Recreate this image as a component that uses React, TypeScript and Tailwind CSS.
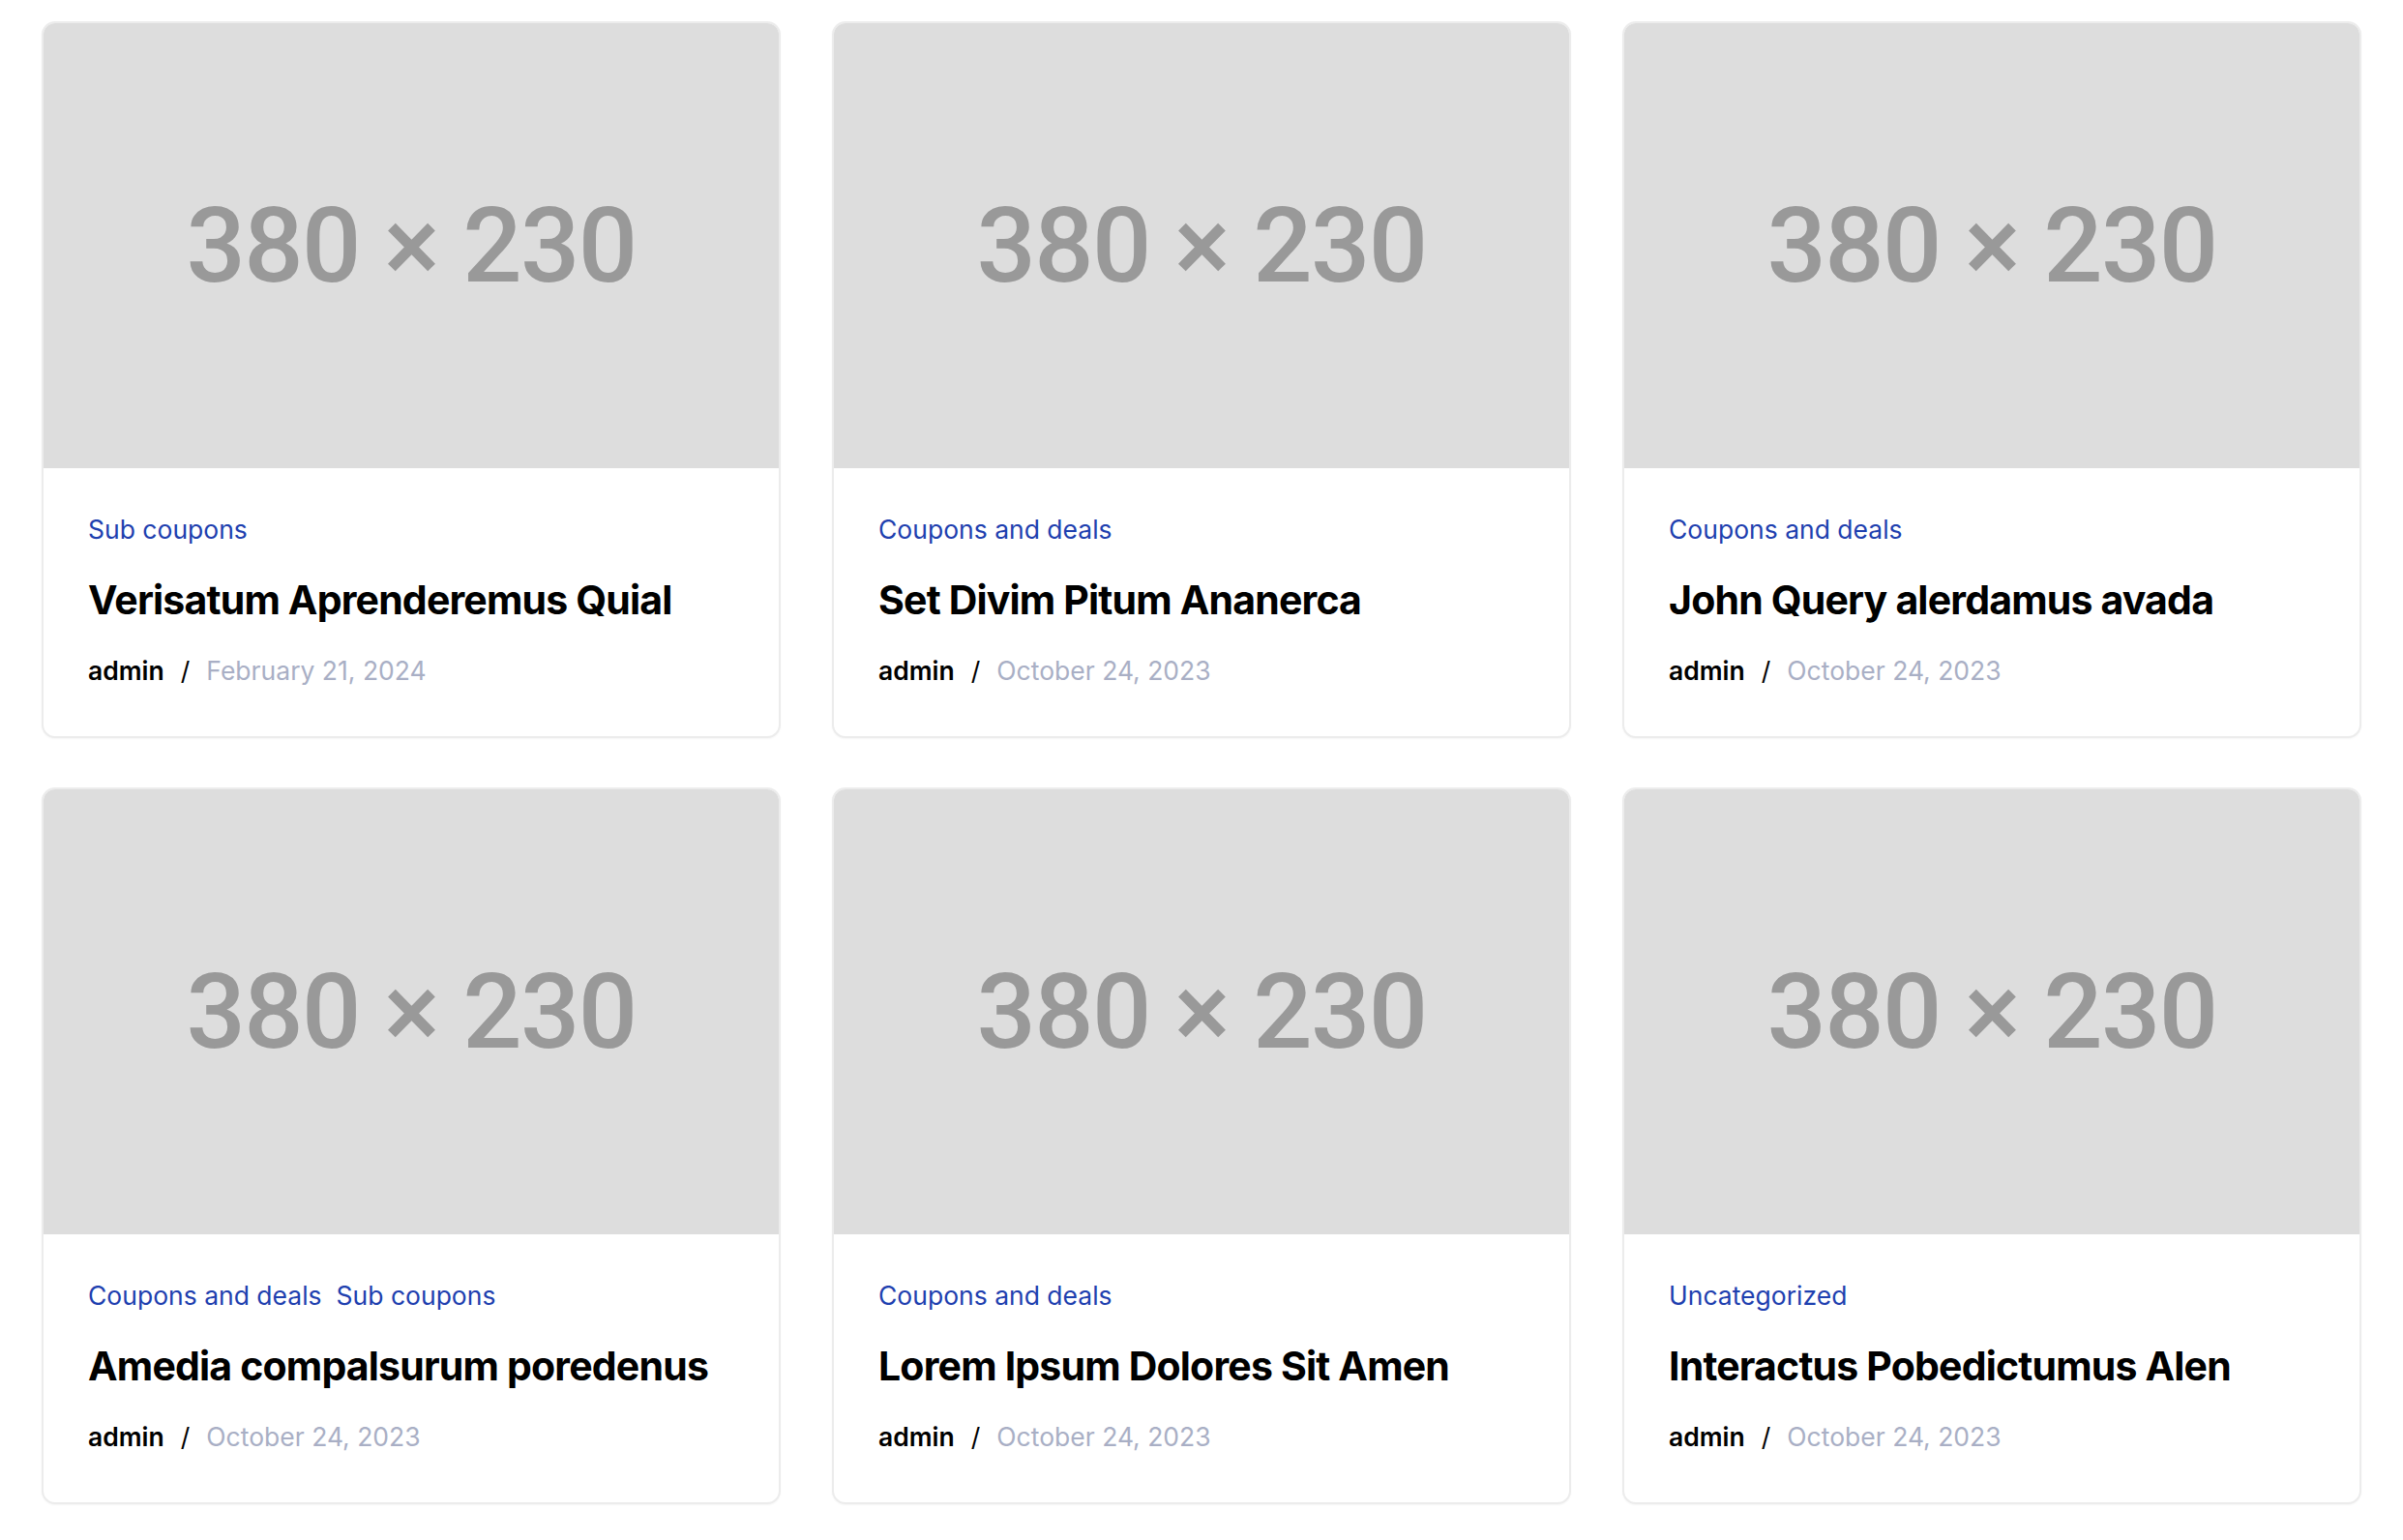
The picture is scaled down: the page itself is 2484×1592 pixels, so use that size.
import React from "react";

type Post = { cats: string[]; title: string; date: string };

const posts: Post[] = [
  { cats: ["Sub coupons"], title: "Verisatum Aprenderemus Quial", date: "February 21, 2024" },
  { cats: ["Coupons and deals"], title: "Set Divim Pitum Ananerca", date: "October 24, 2023" },
  { cats: ["Coupons and deals"], title: "John Query alerdamus avada", date: "October 24, 2023" },
  { cats: ["Coupons and deals", "Sub coupons"], title: "Amedia compalsurum poredenus", date: "October 24, 2023" },
  { cats: ["Coupons and deals"], title: "Lorem Ipsum Dolores Sit Amen", date: "October 24, 2023" },
  { cats: ["Uncategorized"], title: "Interactus Pobedictumus Alen", date: "October 24, 2023" },
];

function Card({ post }: { post: Post }) {
  return (
    <div className="flex flex-col overflow-hidden rounded-[14px] border-2 border-[#ececec] bg-white shadow-[0_1px_2px_rgba(0,0,0,0.04)]">
      <div className="flex aspect-[380/230] w-full items-center justify-center bg-[#dddddd]">
        <span className="font-['Roboto',sans-serif] text-[108px] font-medium leading-none tracking-[-0.015em] text-[#999999]">
          380 × 230
        </span>
      </div>
      <div className="flex flex-col px-[46px] pt-[44px] pb-[48px] font-['Inter',sans-serif]">
        <div className="flex gap-[15px] text-[26.5px] leading-[39px] text-[#1e40af]">
          {post.cats.map((c) => (
            <span key={c}>{c}</span>
          ))}
        </div>
        <h2 className="mt-[28px] text-[41px] font-bold leading-[50px] tracking-[-0.02em] text-black">
          {post.title}
        </h2>
        <div className="mt-[29px] flex items-center text-[26.5px] leading-[39px]">
          <span className="font-semibold text-black">admin</span>
          <span className="mx-[17px] text-black">/</span>
          <span className="text-[#a9afc5]">{post.date}</span>
        </div>
      </div>
    </div>
  );
}

export default function App() {
  return (
    <div className="min-h-[1592px] w-full bg-white px-[43px] pt-[22px] pb-[40px]">
      <div className="grid grid-cols-3 gap-x-[53px] gap-y-[51px]">
        {posts.map((p, i) => (
          <Card key={i} post={p} />
        ))}
      </div>
    </div>
  );
}
